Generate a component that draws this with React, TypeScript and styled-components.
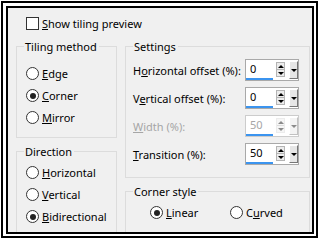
import styled, { createGlobalStyle } from "styled-components";

const GlobalStyle = createGlobalStyle`
  html, body {
    margin: 0;
    padding: 0;
    background: #fff;
  }
  body {
    font-family: "Noto Sans", "Open Sans", sans-serif;
    font-size: 11px;
    color: #000;
  }
  * {
    box-sizing: border-box;
  }
`;

const Frame = styled.div`
  width: 317px;
  height: 237px;
  margin: 1px 1px 2px 1px;
  padding: 3px 2px 2px 3px;
  border: 2px solid #000;
  background: #fff;
`;

const Dialog = styled.div`
  height: 100%;
  border: 2px solid #000;
  background: #f0f0f0;
  overflow: hidden;
  padding: 9px 0 0 8px;
`;

const CheckRow = styled.label`
  display: flex;
  align-items: center;
  gap: 3px;
  height: 13px;
  margin-left: 10px;
  line-height: 13px;
`;

const CheckBox = styled.span`
  width: 13px;
  height: 13px;
  border: 1px solid #333;
  background: #fff;
`;

const Columns = styled.div`
  display: grid;
  grid-template-columns: 101px 185px;
  column-gap: 8px;
  margin-top: 9px;
`;

const Column = styled.div<{ $gap: number }>`
  display: flex;
  flex-direction: column;
  gap: ${(p) => p.$gap}px;
`;

const GroupHeader = styled.div`
  display: flex;
  height: 16px;
  line-height: 16px;

  &::before,
  &::after {
    content: "";
    height: 8px;
    align-self: flex-end;
    border-top: 1px solid #dcdcdc;
  }
  &::before {
    width: 7px;
    border-left: 1px solid #dcdcdc;
  }
  &::after {
    flex: 1;
    border-right: 1px solid #dcdcdc;
  }
  span {
    padding: 0 2px 0 1px;
    white-space: nowrap;
  }
`;

const GroupBody = styled.div<{ $pad: string; $gap?: number; $grid?: boolean }>`
  display: ${(p) => (p.$grid ? "grid" : "flex")};
  flex-direction: column;
  grid-template-columns: 80px 80px;
  gap: ${(p) => p.$gap ?? 0}px;
  padding: ${(p) => p.$pad};
  border: 1px solid #dcdcdc;
  border-top: none;
`;

const RadioRow = styled.label`
  display: flex;
  align-items: center;
  gap: 3px;
  height: 13px;
  line-height: 13px;
  white-space: nowrap;
`;

const RadioCircle = styled.span`
  display: flex;
  align-items: center;
  justify-content: center;
  width: 13px;
  height: 13px;
  border: 1px solid #333;
  border-radius: 50%;
  background: #fff;
  flex-shrink: 0;
`;

const RadioDot = styled.span`
  width: 6px;
  height: 6px;
  border-radius: 50%;
  background: #222;
`;

const SettingRow = styled.div<{ $disabled?: boolean }>`
  display: grid;
  grid-template-columns: 112px 54px;
  align-items: center;
  height: 22px;
  color: ${(p) => (p.$disabled ? "#a6a6a6" : "#000")};
  white-space: nowrap;
`;

const SpinBox = styled.div<{ $disabled?: boolean }>`
  display: flex;
  width: 54px;
  height: 22px;
  border: 1px solid ${(p) => (p.$disabled ? "#cccccc" : "#a9a9a9")};
  background: #fff;
`;

const Field = styled.div`
  display: flex;
  flex-direction: column;
  width: 27px;
  margin-right: 3px;
`;

const Value = styled.span`
  flex: 1;
  padding-left: 4px;
  line-height: 18px;
`;

const Bar = styled.span`
  height: 3px;
  background: #3b94ef;
`;

const Arrows = styled.div<{ $disabled?: boolean }>`
  display: flex;
  flex-direction: column;
  width: 9px;
  margin: 2px 4px 3px 0;
  border: 1px solid ${(p) => (p.$disabled ? "#d6d6d6" : "#b4b4b4")};
  background: #ececec;
  opacity: ${(p) => (p.$disabled ? 0.45 : 1)};
`;

const ArrowCell = styled.span<{ $down?: boolean }>`
  flex: 1;
  display: flex;
  align-items: center;
  justify-content: center;
  border-top: ${(p) => (p.$down ? "1px solid #b4b4b4" : "none")};

  &::after {
    content: "";
    border-left: 3px solid transparent;
    border-right: 3px solid transparent;
    ${(p) =>
      p.$down ? "border-top: 3px solid #000;" : "border-bottom: 3px solid #000;"}
  }
`;

const DropButton = styled.div<{ $disabled?: boolean }>`
  display: flex;
  align-items: center;
  justify-content: center;
  width: 9px;
  margin: 1px 0 1px 0;
  background: #e6e6e6;
  border-right: 1px solid #777;
  border-bottom: 1px solid #777;
  border-top: 1px solid #fff;
  border-left: 1px solid #fff;
  opacity: ${(p) => (p.$disabled ? 0.45 : 1)};

  &::after {
    content: "";
    border-left: 3px solid transparent;
    border-right: 3px solid transparent;
    border-top: 3px solid #000;
  }
`;

function Group({
  title,
  children,
  pad,
  gap,
  grid,
}: {
  title: React.ReactNode;
  children: React.ReactNode;
  pad: string;
  gap?: number;
  grid?: boolean;
}) {
  return (
    <div>
      <GroupHeader>
        <span>{title}</span>
      </GroupHeader>
      <GroupBody $pad={pad} $gap={gap} $grid={grid}>
        {children}
      </GroupBody>
    </div>
  );
}

function Radio({ checked, children }: { checked?: boolean; children: React.ReactNode }) {
  return (
    <RadioRow>
      <RadioCircle>{checked && <RadioDot />}</RadioCircle>
      <span>{children}</span>
    </RadioRow>
  );
}

function Spin({ value, disabled }: { value: string; disabled?: boolean }) {
  return (
    <SpinBox $disabled={disabled}>
      <Field>
        <Value>{value}</Value>
        <Bar />
      </Field>
      <Arrows $disabled={disabled}>
        <ArrowCell />
        <ArrowCell $down />
      </Arrows>
      <DropButton $disabled={disabled} />
    </SpinBox>
  );
}

const settings = [
  { label: <>H<u>o</u>rizontal offset (%):</>, value: "0" },
  { label: <>V<u>e</u>rtical offset (%):</>, value: "0" },
  { label: <><u>W</u>idth (%):</>, value: "50", disabled: true },
  { label: <><u>T</u>ransition (%):</>, value: "50" },
];

export default function App() {
  return (
    <>
      <GlobalStyle />
      <Frame>
        <Dialog>
          <CheckRow>
            <CheckBox />
            <span>
              <u>S</u>how tiling preview
            </span>
          </CheckRow>
          <Columns>
            <Column $gap={6}>
              <Group title="Tiling method" pad="12px 0 13px 9px" gap={9}>
                <Radio>
                  <u>E</u>dge
                </Radio>
                <Radio checked>
                  <u>C</u>orner
                </Radio>
                <Radio>
                  <u>M</u>irror
                </Radio>
              </Group>
              <Group title="Direction" pad="6px 0 30px 9px" gap={9}>
                <Radio>
                  <u>H</u>orizontal
                </Radio>
                <Radio>
                  <u>V</u>ertical
                </Radio>
                <Radio checked>
                  <u>B</u>idirectional
                </Radio>
              </Group>
            </Column>
            <Column $gap={6}>
              <Group title="Settings" pad="4px 0 12px 7px" gap={6}>
                {settings.map((s, i) => (
                  <SettingRow key={i} $disabled={s.disabled}>
                    <span>{s.label}</span>
                    <Spin value={s.value} disabled={s.disabled} />
                  </SettingRow>
                ))}
              </Group>
              <Group title="Corner style" pad="6px 0 30px 24px" grid>
                <Radio checked>
                  <u>L</u>inear
                </Radio>
                <Radio>
                  C<u>u</u>rved
                </Radio>
              </Group>
            </Column>
          </Columns>
        </Dialog>
      </Frame>
    </>
  );
}
